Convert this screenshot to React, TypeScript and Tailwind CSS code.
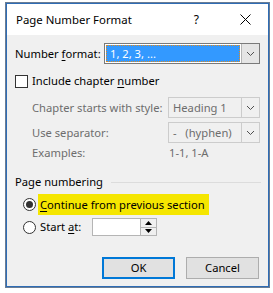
import React from "react";

const font = { fontFamily: '"Segoe UI", "Noto Sans", "Liberation Sans", sans-serif' };

function Chevron() {
  return (
    <svg width="9" height="6" viewBox="0 0 9 6">
      <polyline points="1,1 4.5,4.5 8,1" fill="none" stroke="#505050" strokeWidth="1" />
    </svg>
  );
}

function Select({ value, disabled }: { value: string; disabled?: boolean }) {
  return (
    <div className="flex h-[21px] w-[92px] border border-[#cccccc] bg-[#f0f0f0]">
      <div className={`flex flex-1 items-center whitespace-pre pl-[4px] ${disabled ? "text-[#6d6d6d]" : "text-black"}`}>
        {value}
      </div>
      <div className="flex w-[18px] items-center justify-center border-l border-[#cccccc]">
        <Chevron />
      </div>
    </div>
  );
}

export default function App() {
  return (
    <div className="h-[293px] w-[273px] whitespace-nowrap bg-white pl-[6px] pt-[3px] text-[11.2px] leading-none" style={font}>
      <div className="flex h-[284px] w-[263px] flex-col border border-[#2e6cb5] shadow-[0_0_0_1px_#6b7d94]">
        {/* Title bar */}
        <div className="flex h-[31px] items-center bg-white">
          <span className="pl-[9px] text-[11.4px] text-black">Page Number Format</span>
          <span className="ml-auto mr-[41px] text-[12px] text-black">?</span>
          <svg width="11" height="11" viewBox="0 0 11 11" className="mr-[17px]">
            <path d="M0.5 0.5 L10.5 10.5 M10.5 0.5 L0.5 10.5" stroke="#000" strokeWidth="1" />
          </svg>
        </div>

        {/* Body */}
        <div className="flex flex-1 flex-col bg-[#f0f0f0] pl-[8px] pr-[7px] text-black">
          {/* Number format */}
          <div className="mt-[8px] flex h-[21px] items-center">
            <span className="w-[89px]">
              Number <span className="underline underline-offset-2">f</span>ormat:
            </span>
            <div className="flex h-[21px] w-[156px] border border-[#7a7a7a] bg-white">
              <div className="m-[1px] flex flex-1 items-center border border-dotted border-[#e08a1e] bg-[#3399ff] pl-[3px] text-white">
                1, 2, 3, ...
              </div>
              <div className="flex w-[18px] items-center justify-center border-l border-[#b5b5b5] bg-[#e5e5e5]">
                <Chevron />
              </div>
            </div>
          </div>

          {/* Include chapter number */}
          <div className="mt-[7px] flex h-[20px] items-center">
            <div className="h-[13px] w-[13px] border border-[#333333] bg-white" />
            <span className="ml-[4px]">
              Include chapter <span className="underline underline-offset-2">n</span>umber
            </span>
          </div>

          {/* Chapter style */}
          <div className="mt-[6px] flex h-[21px] items-center text-[#6d6d6d]">
            <span className="w-[153px] pl-[17px]">Chapter starts with style:</span>
            <Select value="Heading 1" disabled />
          </div>

          {/* Separator */}
          <div className="mt-[4px] flex h-[21px] items-center text-[#6d6d6d]">
            <span className="w-[153px] pl-[17px]">Use separator:</span>
            <Select value="-   (hyphen)" disabled />
          </div>

          {/* Examples */}
          <div className="mt-[1px] flex h-[18px] items-center text-[#6d6d6d]">
            <span className="w-[153px] pl-[17px]">Examples:</span>
            <span className="pl-[1px]">1-1, 1-A</span>
          </div>

          {/* Page numbering */}
          <div className="mt-[13px] flex h-[14px] items-center">
            <span>Page numbering</span>
            <div className="ml-[8px] h-px flex-1 bg-[#dcdcdc]" />
          </div>

          <div className="mt-[5px] flex h-[21px] items-center pl-[8px]">
            <div className="flex h-[13px] w-[13px] items-center justify-center rounded-full border border-[#333333] bg-white">
              <div className="h-[7px] w-[7px] rounded-full bg-[#333333]" />
            </div>
            <span className="ml-[2px] flex h-[21px] w-[171px] items-center bg-[#f5e600] pl-[2px]">
              <span className="underline underline-offset-2">C</span>ontinue from previous section
            </span>
          </div>

          <div className="mt-[3px] flex h-[18px] items-center pl-[8px]">
            <div className="h-[13px] w-[13px] rounded-full border border-[#333333] bg-white" />
            <span className="ml-[4px] w-[52px]">
              Start <span className="underline underline-offset-2">a</span>t:
            </span>
            <div className="flex h-[18px] w-[65px] border border-[#b5b5b5] bg-white">
              <div className="flex-1" />
              <div className="flex w-[16px] flex-col border-l border-[#b5b5b5] bg-[#f0f0f0]">
                <div className="flex flex-1 items-center justify-center border-b border-[#b5b5b5]">
                  <svg width="7" height="4" viewBox="0 0 7 4">
                    <polygon points="0,4 3.5,0 7,4" fill="#000" />
                  </svg>
                </div>
                <div className="flex flex-1 items-center justify-center">
                  <svg width="7" height="4" viewBox="0 0 7 4">
                    <polygon points="0,0 3.5,4 7,0" fill="#000" />
                  </svg>
                </div>
              </div>
            </div>
          </div>

          {/* Buttons */}
          <div className="mt-[21px] flex h-[22px] items-center">
            <div className="ml-[87px] flex h-[22px] w-[73px] items-center justify-center border-2 border-[#0078d7] bg-[#e1e1e1]">
              OK
            </div>
            <div className="ml-[11px] flex h-[22px] w-[73px] items-center justify-center border border-[#adadad] bg-[#e1e1e1]">
              Cancel
            </div>
          </div>
        </div>
      </div>
    </div>
  );
}
